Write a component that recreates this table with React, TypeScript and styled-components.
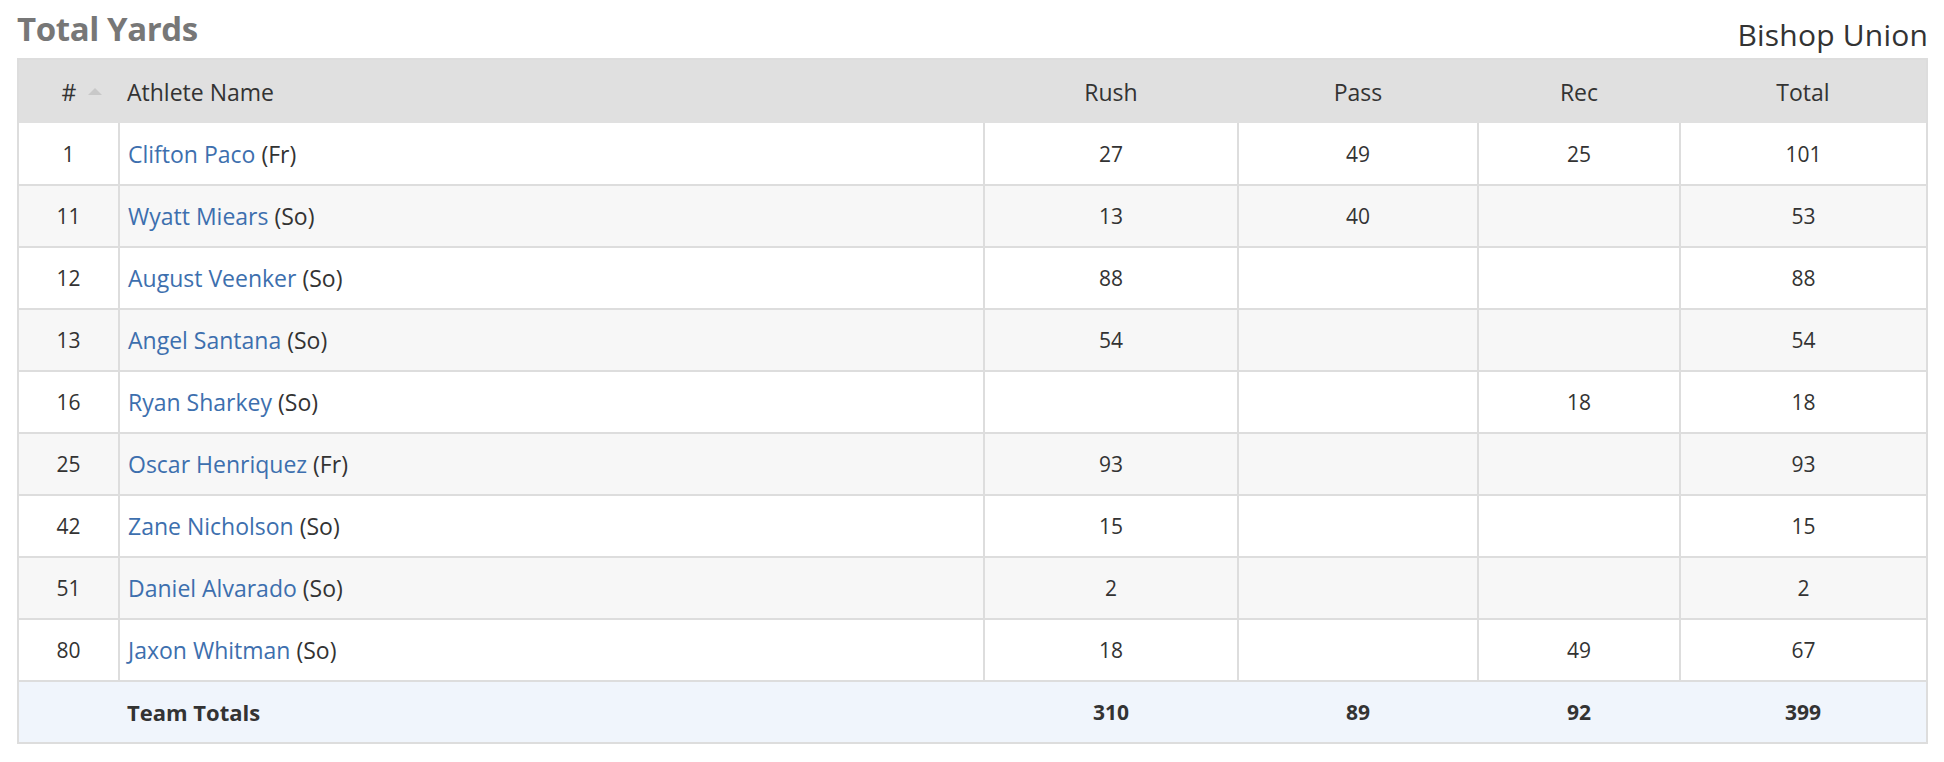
import React from "react";
import styled, { createGlobalStyle } from "styled-components";

const Global = createGlobalStyle`
  html, body { margin: 0; padding: 0; background: #fff; }
  body { font-family: "Open Sans", "Noto Sans", sans-serif; color: #333; }
`;

const Page = styled.div`
  padding: 0 16px 0 17px;
`;

const TitleBar = styled.div`
  display: flex;
  justify-content: space-between;
  align-items: flex-end;
  height: 58px;
`;

const Title = styled.h2`
  margin: 0;
  font-size: 33px;
  font-weight: 700;
  color: #777;
  line-height: 1;
  padding-bottom: 13px;
  letter-spacing: -0.4px;
`;

const Team = styled.div`
  font-size: 30px;
  color: #333;
  line-height: 1;
  padding-bottom: 8px;
  letter-spacing: 0.2px;
`;

const Table = styled.table`
  width: 100%;
  border-collapse: collapse;
  border: 2px solid #ddd;
  table-layout: fixed;
  font-size: 21px;
`;

const HeadRow = styled.tr`
  background: #e0e0e0;
  height: 64px;
`;

const Th = styled.th<{ $align?: string }>`
  font-weight: 400;
  font-size: 23px;
  text-align: ${(p) => p.$align || "center"};
  padding: 0 8px;
  color: #333;
  position: relative;
`;

const SortArrow = styled.span`
  position: absolute;
  left: 69px;
  top: 28px;
  width: 0;
  height: 0;
  border-left: 7px solid transparent;
  border-right: 7px solid transparent;
  border-bottom: 7px solid #c8c8c8;
`;

const Row = styled.tr<{ $alt: boolean }>`
  height: 62px;
  background: ${(p) => (p.$alt ? "#f7f7f7" : "#fff")};
  border-bottom: 2px solid #ddd;
`;

const Td = styled.td<{ $align?: string }>`
  text-align: ${(p) => p.$align || "center"};
  padding: 0 8px;
  border-left: 2px solid #ddd;
  &:first-child { border-left: none; }
`;

const NameTd = styled(Td)`
  text-align: left;
  font-size: 23px;
`;

const Link = styled.a`
  color: #3d6fae;
  text-decoration: none;
`;

const FootRow = styled.tr`
  height: 62px;
  background: #f0f5fc;
  font-weight: 700;
`;

const FootTd = styled.td<{ $align?: string }>`
  text-align: ${(p) => p.$align || "center"};
  padding: 0 8px;
  font-size: ${(p) => (p.$align === "left" ? "22px" : "21px")};
`;

type Athlete = { num: number; name: string; yr: string; rush?: number; pass?: number; rec?: number; total: number };

const data: Athlete[] = [
  { num: 1, name: "Clifton Paco", yr: "Fr", rush: 27, pass: 49, rec: 25, total: 101 },
  { num: 11, name: "Wyatt Miears", yr: "So", rush: 13, pass: 40, total: 53 },
  { num: 12, name: "August Veenker", yr: "So", rush: 88, total: 88 },
  { num: 13, name: "Angel Santana", yr: "So", rush: 54, total: 54 },
  { num: 16, name: "Ryan Sharkey", yr: "So", rec: 18, total: 18 },
  { num: 25, name: "Oscar Henriquez", yr: "Fr", rush: 93, total: 93 },
  { num: 42, name: "Zane Nicholson", yr: "So", rush: 15, total: 15 },
  { num: 51, name: "Daniel Alvarado", yr: "So", rush: 2, total: 2 },
  { num: 80, name: "Jaxon Whitman", yr: "So", rush: 18, rec: 49, total: 67 },
];

export default function App() {
  return (
    <Page>
      <Global />
      <TitleBar>
        <Title>Total Yards</Title>
        <Team>Bishop Union</Team>
      </TitleBar>
      <Table>
        <colgroup>
          <col style={{ width: 101 }} />
          <col style={{ width: 865 }} />
          <col style={{ width: 254 }} />
          <col style={{ width: 240 }} />
          <col style={{ width: 202 }} />
          <col />
        </colgroup>
        <thead>
          <HeadRow>
            <Th>
              #<SortArrow />
            </Th>
            <Th $align="left">Athlete Name</Th>
            <Th>Rush</Th>
            <Th>Pass</Th>
            <Th>Rec</Th>
            <Th>Total</Th>
          </HeadRow>
        </thead>
        <tbody>
          {data.map((a, i) => (
            <Row key={a.num} $alt={i % 2 === 1}>
              <Td>{a.num}</Td>
              <NameTd>
                <Link href="#">{a.name}</Link> ({a.yr})
              </NameTd>
              <Td>{a.rush ?? ""}</Td>
              <Td>{a.pass ?? ""}</Td>
              <Td>{a.rec ?? ""}</Td>
              <Td>{a.total}</Td>
            </Row>
          ))}
        </tbody>
        <tfoot>
          <FootRow>
            <FootTd />
            <FootTd $align="left">Team Totals</FootTd>
            <FootTd>310</FootTd>
            <FootTd>89</FootTd>
            <FootTd>92</FootTd>
            <FootTd>399</FootTd>
          </FootRow>
        </tfoot>
      </Table>
    </Page>
  );
}
